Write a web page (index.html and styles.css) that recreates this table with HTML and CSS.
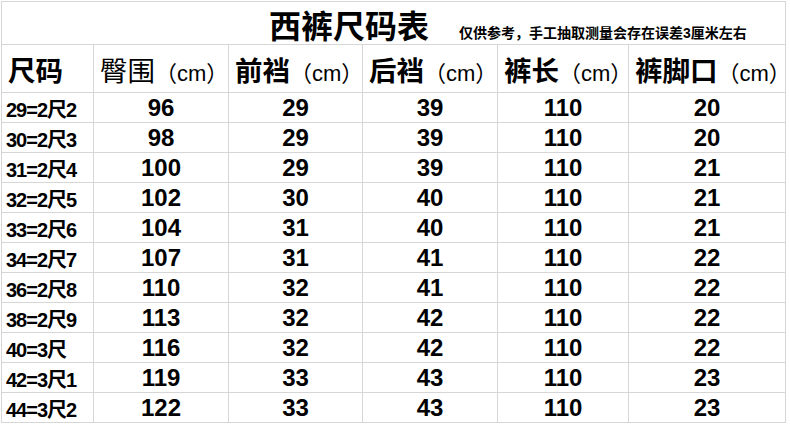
FILE: index.html
```html
<!DOCTYPE html>
<html lang="zh-CN">
<head>
<meta charset="utf-8">
<title>西裤尺码表</title>
<link rel="stylesheet" href="styles.css">
</head>
<body>
<div class="sheet">
  <div class="cell title-cell">
    <span class="title">西裤尺码表</span>
    <span class="note">仅供参考，手工抽取测量会存在误差3厘米左右</span>
  </div>

  <div class="cell head"><b>尺码</b></div>
  <div class="cell head"><span class="light">臀围</span><span class="unit">（cm）</span></div>
  <div class="cell head"><b>前裆</b><span class="unit">（cm）</span></div>
  <div class="cell head"><b>后裆</b><span class="unit">（cm）</span></div>
  <div class="cell head"><b>裤长</b><span class="unit">（cm）</span></div>
  <div class="cell head"><b>裤脚口</b><span class="unit">（cm）</span></div>

  <div class="cell size">29=2尺2</div><div class="cell num">96</div><div class="cell num">29</div><div class="cell num">39</div><div class="cell num">110</div><div class="cell num">20</div>
  <div class="cell size">30=2尺3</div><div class="cell num">98</div><div class="cell num">29</div><div class="cell num">39</div><div class="cell num">110</div><div class="cell num">20</div>
  <div class="cell size">31=2尺4</div><div class="cell num">100</div><div class="cell num">29</div><div class="cell num">39</div><div class="cell num">110</div><div class="cell num">21</div>
  <div class="cell size">32=2尺5</div><div class="cell num">102</div><div class="cell num">30</div><div class="cell num">40</div><div class="cell num">110</div><div class="cell num">21</div>
  <div class="cell size">33=2尺6</div><div class="cell num">104</div><div class="cell num">31</div><div class="cell num">40</div><div class="cell num">110</div><div class="cell num">21</div>
  <div class="cell size">34=2尺7</div><div class="cell num">107</div><div class="cell num">31</div><div class="cell num">41</div><div class="cell num">110</div><div class="cell num">22</div>
  <div class="cell size">36=2尺8</div><div class="cell num">110</div><div class="cell num">32</div><div class="cell num">41</div><div class="cell num">110</div><div class="cell num">22</div>
  <div class="cell size">38=2尺9</div><div class="cell num">113</div><div class="cell num">32</div><div class="cell num">42</div><div class="cell num">110</div><div class="cell num">22</div>
  <div class="cell size">40=3尺</div><div class="cell num">116</div><div class="cell num">32</div><div class="cell num">42</div><div class="cell num">110</div><div class="cell num">22</div>
  <div class="cell size">42=3尺1</div><div class="cell num">119</div><div class="cell num">33</div><div class="cell num">43</div><div class="cell num">110</div><div class="cell num">23</div>
  <div class="cell size">44=3尺2</div><div class="cell num">122</div><div class="cell num">33</div><div class="cell num">43</div><div class="cell num">110</div><div class="cell num">23</div>
</div>
</body>
</html>
```

FILE: styles.css
```css
html, body {
  margin: 0;
  padding: 0;
  background: #ffffff;
}

body {
  font-family: "Liberation Sans", "Noto Sans CJK SC", sans-serif;
  color: #000000;
}

.sheet {
  display: grid;
  grid-template-columns: 92px 135px 134px 135px 131px 157px;
  grid-template-rows: 43px 48px repeat(11, 30px);
  margin: 1px 0 0 1px;
  width: max-content;
  border-left: 1px solid #d6d6d6;
  border-top: 1px solid #d6d6d6;
}

.cell {
  box-sizing: border-box;
  border-right: 1px solid #d6d6d6;
  border-bottom: 1px solid #d6d6d6;
  display: flex;
  align-items: center;
  white-space: nowrap;
}

.title-cell {
  grid-column: 1 / -1;
  align-items: flex-end;
  padding-left: 267px;
  padding-bottom: 1px;
}

.title {
  font-family: "Noto Sans CJK SC", sans-serif;
  font-weight: 700;
  font-size: 32px;
  line-height: 38px;
}

.note {
  font-family: "Liberation Sans", "Noto Sans CJK SC", sans-serif;
  font-weight: 700;
  font-size: 14px;
  line-height: 20px;
  margin-left: 30px;
}

.head {
  padding-left: 6px;
  font-size: 27.5px;
  padding-top: 1px;
}

.head b {
  font-family: "Noto Sans CJK SC", sans-serif;
  font-weight: 700;
}

.head .light {
  font-family: "Noto Sans CJK SC", sans-serif;
  font-weight: 400;
}

.head .unit {
  font-size: 22px;
  font-weight: 400;
  margin-top: 3px;
  padding-left: 11px;
  font-feature-settings: "halt" 1;
}

.size {
  padding-left: 4px;
  font-weight: 700;
  font-size: 20px;
  letter-spacing: -1px;
  padding-top: 1px;
}

.num {
  justify-content: center;
  font-weight: 700;
  font-size: 24px;
  padding-top: 1px;
}
```
